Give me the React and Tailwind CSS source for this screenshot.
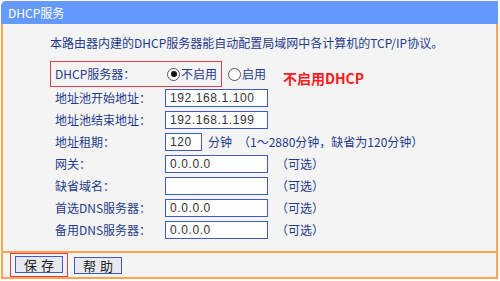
import React from 'react';

const font = { fontFamily: '"Noto Sans CJK SC", "Liberation Sans", sans-serif' };

const Radio = ({ checked }) => (
  <span className="inline-flex items-center justify-center w-[13px] h-[13px] rounded-full border border-[#555] bg-white">
    {checked && <span className="w-[6px] h-[6px] rounded-full bg-[#111]" />}
  </span>
);

const Field = ({ value = '', width = 'w-[103px]' }) => (
  <div
    className={`${width} h-[18px] border border-[#3b5cc4] bg-white flex items-center pl-[4px] text-[12px] text-[#333] tracking-[0.6px] font-['Liberation_Sans',sans-serif]`}
  >
    {value}
  </div>
);

const Row = ({ label, children }) => (
  <div className="flex items-center h-[22px]">
    <div className="w-[115px] pl-[5px] shrink-0">{label}</div>
    {children}
  </div>
);

const Optional = () => <span className="ml-[8px] text-[12px]">（可选）</span>;

const App = () => {
  return (
    <div className="w-[500px] h-[281px] bg-white text-[12px] text-[#1f3b8c]" style={font}>
      <div className="ml-[1px] pt-[1px] w-[497px]">
        {/* Header */}
        <div className="h-[23px] bg-[#6699ff] rounded-tl-[5px] flex items-center pl-[7px] text-white text-[12px]">
          DHCP服务
        </div>

        {/* Body */}
        <div className="h-[229px] bg-[#f4f4f4] border-x-2 border-b-2 border-[#ffa54f] pl-[47px] pt-[9px]">
          <div className="h-[19px] leading-[19px] text-[12px]">
            本路由器内建的DHCP服务器能自动配置局域网中各计算机的TCP/IP协议。
          </div>

          <div className="flex items-center mt-[9px] h-[26px]">
            <div className="flex items-center h-[26px] w-[172px] border border-[#e0404a] shrink-0">
              <div className="w-[116px] pl-[4px]">DHCP服务器：</div>
              <Radio checked />
              <span className="ml-[1px]">不启用</span>
            </div>
            <div className="flex items-center ml-[6px]">
              <Radio />
              <span className="ml-[1px]">启用</span>
            </div>
            <div className="ml-[17px] mt-[8px] text-[14px] font-bold text-[#ff1a1a]">不启用DHCP</div>
          </div>

          <Row label="地址池开始地址：">
            <Field value="192.168.1.100" />
          </Row>
          <Row label="地址池结束地址：">
            <Field value="192.168.1.199" />
          </Row>
          <Row label="地址租期：">
            <Field value="120" width="w-[37px]" />
            <span className="ml-[6px]">分钟</span>
            <span className="ml-[6px]">（1～2880分钟，缺省为120分钟）</span>
          </Row>
          <Row label="网关：">
            <Field value="0.0.0.0" />
            <Optional />
          </Row>
          <Row label="缺省域名：">
            <Field />
            <Optional />
          </Row>
          <Row label="首选DNS服务器：">
            <Field value="0.0.0.0" />
            <Optional />
          </Row>
          <Row label="备用DNS服务器：">
            <Field value="0.0.0.0" />
            <Optional />
          </Row>
        </div>

        {/* Footer */}
        <div className="h-[26px] bg-[#f4f4f4] border-x-2 border-b-2 border-[#ffa54f] flex items-center pl-[7px]">
          <div className="border border-[#e0404a] p-[2px] px-[4px]">
            <button className="w-[48px] h-[17px] bg-[#e8e8ef] border border-[#3b5cc4] text-[13px] leading-none text-[#222] tracking-[4px] pl-[4px]">
              保存
            </button>
          </div>
          <button className="ml-[6px] w-[48px] h-[17px] bg-[#e8e8ef] border border-[#3b5cc4] text-[13px] leading-none text-[#222] tracking-[4px] pl-[4px]">
            帮助
          </button>
        </div>
      </div>
    </div>
  );
};

export default App;
